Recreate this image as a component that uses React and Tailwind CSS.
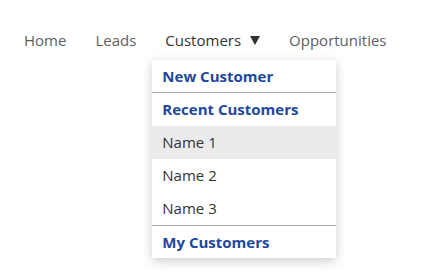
import { useState } from 'react';

const navItems = ['Home', 'Leads'];
const recent = ['Name 1', 'Name 2', 'Name 3'];

export default function App() {
  const [hovered, setHovered] = useState('Name 1');

  return (
    <div className="w-[432px] h-[280px] bg-white font-['Open_Sans',sans-serif] text-[15px]">
      {/* Top nav */}
      <nav className="flex items-center gap-[29px] pl-6 pt-[28px] h-[52px]">
        {navItems.map((item) => (
          <span key={item} className="text-[#606060] leading-[22px]">
            {item}
          </span>
        ))}
        <div className="relative">
          <span className="flex items-center text-[#333] leading-[22px]">
            Customers
            <span className="ml-[9px] w-0 h-0 border-l-[5px] border-r-[5px] border-t-[9px] border-l-transparent border-r-transparent border-t-[#333]" />
          </span>
          {/* Dropdown */}
          <div className="absolute left-[-13px] top-[31px] w-[184px] bg-white shadow-[0_3px_10px_rgba(0,0,0,0.2)] z-10">
            <div className="h-[32px] flex items-center px-[10px] font-bold text-[#1d479e]">
              New Customer
            </div>
            <div className="h-px bg-[#aaa]" />
            <div className="h-[33px] flex items-center px-[10px] font-bold text-[#1d479e]">
              Recent Customers
            </div>
            {recent.map((name) => (
              <div
                key={name}
                onMouseEnter={() => setHovered(name)}
                className={`h-[33px] flex items-center px-[10px] text-[#333] ${
                  hovered === name ? 'bg-[#ebebeb]' : ''
                }`}
              >
                {name}
              </div>
            ))}
            <div className="h-px bg-[#aaa]" />
            <div className="h-[32px] flex items-center px-[10px] font-bold text-[#1d479e]">
              My Customers
            </div>
          </div>
        </div>
        <span className="text-[#606060] leading-[22px]">Opportunities</span>
      </nav>
    </div>
  );
}
